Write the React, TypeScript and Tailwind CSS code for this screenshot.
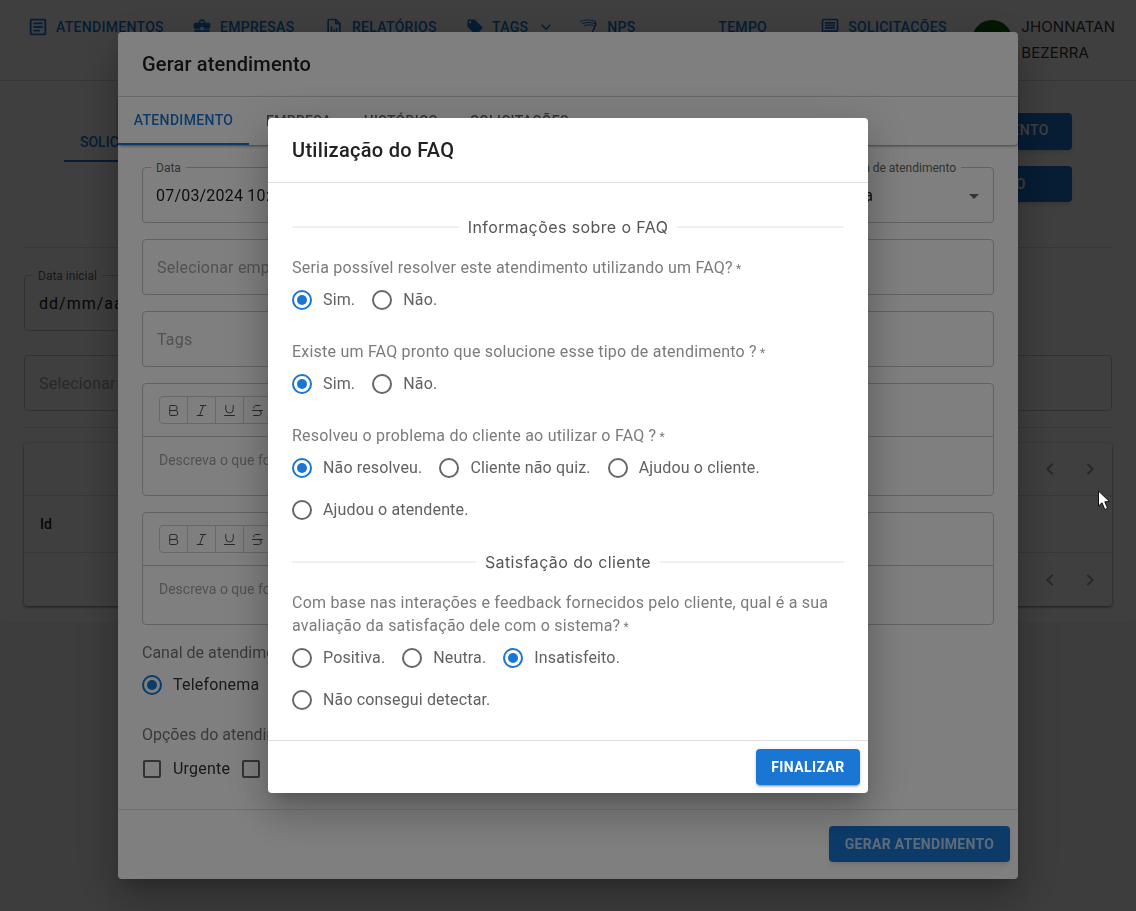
import type { ReactNode } from "react";
import {
  MdOutlineArticle,
  MdBusinessCenter,
  MdLocalOffer,
  MdOutlineMessage,
  MdKeyboardArrowDown,
  MdChevronLeft,
  MdChevronRight,
  MdArrowDropDown,
} from "react-icons/md";
import { TbFileAnalytics } from "react-icons/tb";
import { Bold, Italic, Strikethrough, Underline } from "lucide-react";

const roboto = "font-['Roboto',sans-serif]";
const poppins = "font-['Inter',sans-serif]";

function NavItem({ icon, label, width, gap }: { icon?: ReactNode; label: string; width: string; gap?: string }) {
  return (
    <div className={`flex items-center ${gap ?? "gap-[8px]"} ${width}`}>
      {icon}
      <span className="text-[14px] font-medium tracking-[0.3px] text-[#1976d2]">{label}</span>
    </div>
  );
}

function NpsIcon() {
  return (
    <svg width="20" height="16" viewBox="0 0 20 16" fill="none" stroke="#1976d2" strokeWidth="1">
      <path d="M1 3 C5 0.5 11 0.5 17 2.5" />
      <path d="M3 5 C7 3 11 3 16 4.5" />
      <path d="M5 7 C8 5.5 11 5.5 15 6.5" />
      <path d="M16 3 L17 5 L13 14" strokeWidth="1.6" />
    </svg>
  );
}

function Field({
  label,
  value,
  placeholder,
  className,
  spaced,
  select,
}: {
  label?: string;
  value?: string;
  placeholder?: string;
  className?: string;
  spaced?: boolean;
  select?: boolean;
}) {
  return (
    <div
      className={`relative flex h-[56px] items-center justify-between rounded border border-[#c4c4c4] pl-[13px] pr-[7px] pt-[1px] ${className ?? ""}`}
    >
      {label ? (
        <span className="absolute -top-[9px] left-[8px] whitespace-nowrap bg-white px-[5px] text-[12px] text-[#666666]">
          {label}
        </span>
      ) : null}
      {value ? (
        <span className={`whitespace-nowrap text-[16px] text-[#212121] ${spaced ? "pl-px tracking-[1px]" : "tracking-[0.2px]"}`}>
          {value}
        </span>
      ) : null}
      {placeholder ? (
        <span className="whitespace-nowrap pl-px text-[16px] tracking-[0.2px] text-[#a3a3a3]">{placeholder}</span>
      ) : null}
      {select ? <MdArrowDropDown className="text-[24px] text-[#666666]" /> : null}
    </div>
  );
}

function ToolButton({ children, last }: { children: ReactNode; last?: boolean }) {
  return (
    <span className={`flex w-[28px] items-center justify-center ${last ? "" : "border-r border-[#d0d0d0]"}`}>{children}</span>
  );
}

function Editor() {
  return (
    <div className="flex h-[113px] flex-col rounded border border-[#c4c4c4]">
      <div className="flex h-[53px] items-center border-b border-[#c4c4c4] px-[16px]">
        <div className="flex h-[28px] rounded border border-[#d0d0d0] text-[#444444]">
          <ToolButton>
            <Bold size={15} strokeWidth={1.5} />
          </ToolButton>
          <ToolButton>
            <Italic size={15} strokeWidth={1.5} />
          </ToolButton>
          <ToolButton>
            <Underline size={15} strokeWidth={1.5} />
          </ToolButton>
          <ToolButton>
            <Strikethrough size={15} strokeWidth={1.5} />
          </ToolButton>
          <ToolButton last> </ToolButton>
        </div>
      </div>
      <div className="px-[16px] pt-[14px] text-[14px] leading-[18px] text-[#a3a3a3]">Descreva o que foi feito</div>
    </div>
  );
}

function Radio({ checked }: { checked?: boolean }) {
  return (
    <span
      className={`flex h-[20px] w-[20px] shrink-0 items-center justify-center rounded-full border-2 ${
        checked ? "border-[#1976d2]" : "border-[#666666]"
      }`}
    >
      {checked ? <span className="h-[10px] w-[10px] rounded-full bg-[#1976d2]" /> : null}
    </span>
  );
}

function RadioOption({ label, checked, gap }: { label: string; checked?: boolean; gap: string }) {
  return (
    <div className={`flex items-center gap-[11px] ${gap}`}>
      <Radio checked={checked} />
      <span className="whitespace-nowrap text-[16px] leading-[24px] tracking-[0.15px] text-[#616161]">{label}</span>
    </div>
  );
}

function SectionTitle({ children }: { children: string }) {
  return (
    <div className="flex items-center gap-[9px]">
      <div className="h-[2px] flex-1 bg-[#f0f0f0]" />
      <span className={`${poppins} text-[16px] leading-[24px] tracking-[0.4px] text-[#555555]`}>{children}</span>
      <div className="h-[2px] flex-1 bg-[#f0f0f0]" />
    </div>
  );
}

function Question({ children }: { children: ReactNode }) {
  return <p className="text-[16px] leading-[23px] tracking-[0.22px] text-[#7b7b7b]">{children}</p>;
}

function Star() {
  return <span className="text-[12px]"> *</span>;
}

function BasePage() {
  return (
    <div className="min-h-[911px] bg-[#f5f5f5]">
      <header className="flex h-[81px] border-b border-[#d8d8d8] bg-white pl-[27px]">
        <div className="flex h-[54px] items-center">
          <NavItem
            width="w-[165px]"
            gap="gap-[7px]"
            label="ATENDIMENTOS"
            icon={<MdOutlineArticle className="text-[22px] text-[#1976d2]" />}
          />
          <NavItem width="w-[132px]" label="EMPRESAS" icon={<MdBusinessCenter className="text-[20px] text-[#1976d2]" />} />
          <NavItem width="w-[142px]" label="RELATÓRIOS" icon={<TbFileAnalytics className="text-[20px] text-[#1976d2]" />} />
          <NavItem width="" label="TAGS" icon={<MdLocalOffer className="text-[18px] text-[#1976d2]" />} />
          <MdKeyboardArrowDown className="ml-[8px] mr-[23px] text-[20px] text-[#1976d2]" />
          <NavItem width="w-[139px]" label="NPS" icon={<NpsIcon />} />
          <NavItem width="w-[102px]" label="TEMPO" />
          <NavItem width="w-[152px]" label="SOLICITAÇÕES" icon={<MdOutlineMessage className="text-[20px] text-[#1976d2]" />} />
        </div>
        <div className="mt-[20px] h-[40px] w-[40px] shrink-0 rounded-full bg-[#0b5d0b]" />
        <div className={`${poppins} ml-[9px] mt-[14px] text-[15px] leading-[26px] tracking-[0.1px] text-[#333333]`}>
          JHONNATAN
          <br />
          BEZERRA
        </div>
      </header>

      <main className="h-[541px] rounded-b bg-white px-[24px]">
        <div className="flex justify-between pt-[32px]">
          <div className="ml-[40px] mt-[16px] h-[33px] w-[120px] border-b-2 border-[#1976d2] pl-[16px] pt-[3px] text-[14px] font-medium text-[#1976d2]">
            SOLICITAÇÕES
          </div>
          <div className="mr-[40px] flex w-[197px] flex-col gap-[16px]">
            <div className="flex h-[37px] items-center justify-center rounded bg-[#1976d2] pb-[2px] text-[14px] font-medium tracking-[0.4px] text-white shadow-md">
              GERAR ATENDIMENTO
            </div>
            <div className="flex h-[36px] items-center justify-center rounded bg-[#1976d2] text-[14px] font-medium tracking-[0.1px] text-white shadow-md">
              VER RELATÓRIO
            </div>
          </div>
        </div>
        <div className="mt-[45px] h-px bg-[#e0e0e0]" />
        <div className="mt-[27px] w-[300px]">
          <Field label="Data inicial" value="dd/mm/aaaa" spaced />
        </div>
        <div className="mt-[24px]">
          <Field placeholder="Selecionar empresa" />
        </div>
        <div className="mt-[16px] h-px bg-[#e0e0e0]" />
        <div className="mt-[15px] rounded bg-white shadow-[0_1px_3px_rgba(0,0,0,0.6)]">
          <div className="flex h-[53px] items-center justify-end gap-[16px] border-b border-[#e0e0e0] pr-[10px] text-[24px] text-[#9e9e9e]">
            <MdChevronLeft />
            <MdChevronRight />
          </div>
          <div className="flex h-[57px] items-center border-b border-[#e0e0e0] pl-[16px] text-[14px] font-medium text-[#212121]">
            Id
          </div>
          <div className="flex h-[53px] items-center justify-end gap-[16px] pr-[10px] text-[24px] text-[#9e9e9e]">
            <MdChevronLeft />
            <MdChevronRight />
          </div>
        </div>
      </main>
    </div>
  );
}

function GerarAtendimentoModal() {
  return (
    <div className="fixed inset-0 flex items-center justify-center bg-black/50">
      <div className="h-[847px] w-[900px] rounded bg-white shadow-[0_11px_15px_-7px_rgba(0,0,0,0.2),0_24px_38px_3px_rgba(0,0,0,0.14),0_9px_46px_8px_rgba(0,0,0,0.12)]">
        <div className="flex h-[65px] items-center border-b border-[#e0e0e0] pl-[24px] text-[20px] font-medium leading-none tracking-[0.15px] text-[#212121]">
          Gerar atendimento
        </div>
        <div className="flex h-[48px] rounded-b bg-white shadow-[0_1px_3px_rgba(0,0,0,0.5)]">
          <div className="flex w-[131px] items-center justify-center border-b-2 border-[#1976d2] text-[14px] font-medium tracking-[0.35px] text-[#1976d2]">
            ATENDIMENTO
          </div>
          <div className="flex items-center gap-[32px] pl-[17px] text-[14px] font-medium tracking-[0.3px] text-[#666666]">
            <span>EMPRESA</span>
            <span>HISTÓRICO</span>
            <span>SOLICITAÇÕES</span>
          </div>
        </div>
        <div className="px-[24px] pt-[22px]">
          <div className="flex justify-between">
            <Field className="w-[300px]" label="Data" value="07/03/2024 10:30" />
            <Field className="w-[190px]" label="Categoria de atendimento" value="Externa" select />
          </div>
          <Field className="mt-[16px]" placeholder="Selecionar empresa" />
          <Field className="mt-[16px]" placeholder="Tags" />
          <div className="mt-[16px]">
            <Editor />
          </div>
          <div className="mt-[16px]">
            <Editor />
          </div>
          <p className="mt-[16px] text-[16px] leading-[24px] text-[#757575]">Canal de atendimento</p>
          <div className="mt-[8px] flex items-center gap-[11px]">
            <Radio checked />
            <span className="text-[16px] tracking-[0.2px] text-[#333333]">Telefonema</span>
          </div>
          <p className="mt-[26px] text-[16px] leading-[24px] text-[#757575]">Opções do atendimento</p>
          <div className="mt-[10px] flex items-center pl-px">
            <span className="h-[18px] w-[18px] rounded-[2px] border-2 border-[#666666]" />
            <span className="ml-[12px] text-[16px] tracking-[0.2px] text-[#333333]">Urgente</span>
            <span className="ml-[12px] h-[18px] w-[18px] rounded-[2px] border-2 border-[#666666]" />
          </div>
        </div>
        <div className="mt-[28px] flex justify-end border-t border-[#e0e0e0] pr-[8px] pt-[16px]">
          <div className="flex h-[36px] w-[181px] items-center justify-center rounded bg-[#1976d2] text-[14px] font-bold tracking-[0.3px] text-white/70 shadow-md">
            GERAR ATENDIMENTO
          </div>
        </div>
      </div>
    </div>
  );
}

function FaqModal() {
  return (
    <div className="fixed inset-0 flex items-center justify-center bg-black/50">
      <div className="flex h-[675px] w-[600px] flex-col rounded bg-white shadow-[0_11px_15px_-7px_rgba(0,0,0,0.2),0_24px_38px_3px_rgba(0,0,0,0.14),0_9px_46px_8px_rgba(0,0,0,0.12)]">
        <div className="flex h-[65px] shrink-0 items-center border-b border-[#e0e0e0] pl-[24px] text-[20px] font-medium leading-none tracking-[0.3px] text-[#212121]">
          Utilização do FAQ
        </div>
        <div className="flex-1 px-[24px] pt-[32px]">
          <SectionTitle>Informações sobre o FAQ</SectionTitle>
          <div className="mt-[17px]">
            <Question>
              Seria possível resolver este atendimento utilizando um FAQ?
              <Star />
            </Question>
            <div className="mt-[7px] flex">
              <RadioOption checked label="Sim." gap="mr-[17px]" />
              <RadioOption label="Não." gap="" />
            </div>
          </div>
          <div className="mt-[28px]">
            <Question>
              Existe um FAQ pronto que solucione esse tipo de atendimento ?
              <Star />
            </Question>
            <div className="mt-[7px] flex">
              <RadioOption checked label="Sim." gap="mr-[17px]" />
              <RadioOption label="Não." gap="" />
            </div>
          </div>
          <div className="mt-[28px]">
            <Question>
              Resolveu o problema do cliente ao utilizar o FAQ ?
              <Star />
            </Question>
            <div className="mt-[7px] flex flex-wrap gap-y-[18px]">
              <RadioOption checked label="Não resolveu." gap="mr-[17px]" />
              <RadioOption label="Cliente não quiz." gap="mr-[17px]" />
              <RadioOption label="Ajudou o cliente." gap="mr-[17px]" />
              <RadioOption label="Ajudou o atendente." gap="" />
            </div>
          </div>
          <div className="mt-[28px]">
            <SectionTitle>Satisfação do cliente</SectionTitle>
          </div>
          <div className="mt-[17px]">
            <Question>
              Com base nas interações e feedback fornecidos pelo cliente, qual é a sua avaliação da satisfação dele com
              o sistema?
              <Star />
            </Question>
            <div className="mt-[7px] flex flex-wrap gap-y-[18px]">
              <RadioOption label="Positiva." gap="mr-[17px]" />
              <RadioOption label="Neutra." gap="mr-[17px]" />
              <RadioOption checked label="Insatisfeito." gap="w-[300px]" />
              <RadioOption label="Não consegui detectar." gap="" />
            </div>
          </div>
        </div>
        <div className="flex h-[53px] shrink-0 items-start justify-end border-t border-[#e0e0e0] pr-[8px] pt-[8px]">
          <div className="flex h-[36px] w-[104px] items-center justify-center rounded bg-[#1976d2] text-[14px] font-bold tracking-[0.4px] text-white shadow-[0_3px_1px_-2px_rgba(0,0,0,0.2),0_2px_2px_0_rgba(0,0,0,0.14),0_1px_5px_0_rgba(0,0,0,0.12)]">
            FINALIZAR
          </div>
        </div>
      </div>
    </div>
  );
}

export default function App() {
  return (
    <div className={`${roboto} relative h-[911px] overflow-hidden`}>
      <BasePage />
      <GerarAtendimentoModal />
      <FaqModal />
      {/* mouse pointer captured in the screenshot */}
      <svg className="absolute left-[1097px] top-[490px]" width="15" height="22" viewBox="0 0 15 22">
        <path d="M1.5 1 L1.5 16 L5 12.8 L7.8 19.5 L10.6 18.3 L7.8 11.8 L12.5 11.6 Z" fill="#ffffff" stroke="#111111" strokeWidth="1" />
      </svg>
    </div>
  );
}
